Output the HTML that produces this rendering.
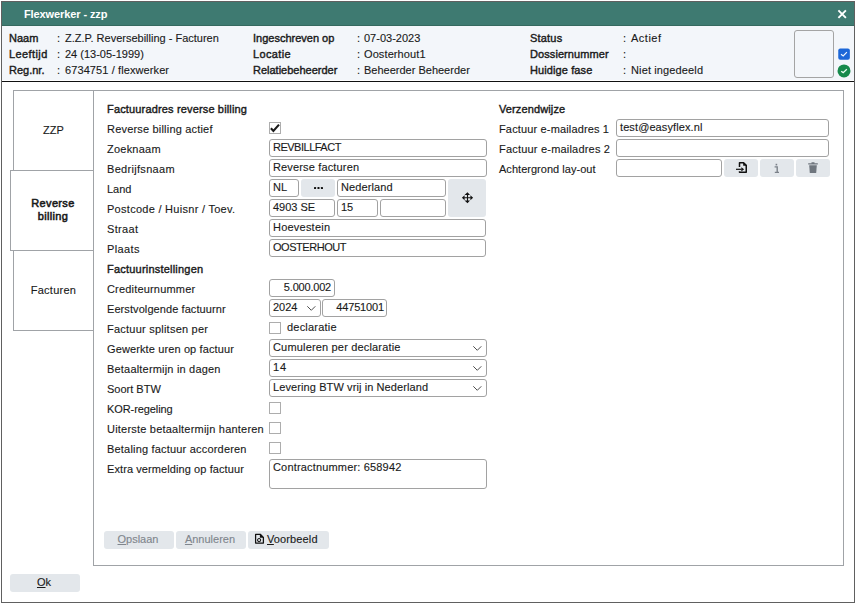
<!DOCTYPE html>
<html><head><meta charset="utf-8">
<style>
*{box-sizing:border-box;margin:0;padding:0}
html,body{width:856px;height:604px;background:#fff;overflow:hidden;position:relative;font-family:"Liberation Sans",sans-serif;font-size:11px;color:#222}
.a{position:absolute}
.t{position:absolute;white-space:nowrap;line-height:13px;font-size:11px;color:#1a1a1a;-webkit-text-stroke:0.12px currentColor}
.t.b{-webkit-text-stroke:0.4px currentColor}
.win{left:1px;top:1px;width:854px;height:602px;border:1px solid #606060;background:#fff}
.hdr{left:2px;top:2px;width:852px;height:24px;background:#3e7a71;border-bottom:1px solid #35695f}
.info{left:2px;top:26px;width:852px;height:54px;background:#f3f6fa}
.sep{left:2px;top:81px;width:852px;height:1px;background:#111}
.tab{position:absolute;border:1px solid #a0a3a7;background:#fff}
.panel{left:93px;top:90px;width:751px;height:476px;border:1px solid #a0a3a7;background:#fff}
.in{position:absolute;height:18px;border:1px solid #a2a2a2;border-radius:3px;background:#fff}
.cb{position:absolute;width:12px;height:12px;border:1px solid #adadad;background:#fff}
.btn{position:absolute;height:18px;border-radius:3px;background:#e3e7eb}
</style></head><body>
<div class="a win"></div>
<div class="a hdr"></div>
<div class="t" style="left:24px;top:8px;color:#fff;font-weight:bold;letter-spacing:-0.1px;-webkit-text-stroke:0">Flexwerker - zzp</div>
<svg class="a" style="left:837px;top:9px" width="11" height="11" viewBox="0 0 11 11"><path d="M1.4 1.4L8.9 8.9M8.9 1.4L1.4 8.9" stroke="#fff" stroke-width="1.9"/></svg>
<div class="a info"></div>
<div class="a sep"></div>

<!-- header info -->
<div class="t b" style="left:9px;top:32px">Naam</div>
<div class="t b" style="left:9px;top:48px;letter-spacing:0.4px">Leeftijd</div>
<div class="t b" style="left:9px;top:64px">Reg.nr.</div>
<div class="t" style="left:57px;top:32px">:</div><div class="t" style="left:65px;top:32px">Z.Z.P. Reversebilling - Facturen</div>
<div class="t" style="left:57px;top:48px">:</div><div class="t" style="left:65px;top:48px">24 (13-05-1999)</div>
<div class="t" style="left:57px;top:64px">:</div><div class="t" style="left:65px;top:64px;letter-spacing:0.1px">6734751 / flexwerker</div>

<div class="t b" style="left:253px;top:32px">Ingeschreven op</div>
<div class="t b" style="left:253px;top:48px;letter-spacing:0.35px">Locatie</div>
<div class="t b" style="left:253px;top:64px">Relatiebeheerder</div>
<div class="t" style="left:357px;top:32px">:</div><div class="t" style="left:364px;top:32px">07-03-2023</div>
<div class="t" style="left:357px;top:48px">:</div><div class="t" style="left:364px;top:48px;letter-spacing:0.1px">Oosterhout1</div>
<div class="t" style="left:357px;top:64px">:</div><div class="t" style="left:364px;top:64px">Beheerder Beheerder</div>

<div class="t b" style="left:530px;top:32px;letter-spacing:0.2px">Status</div>
<div class="t b" style="left:530px;top:48px;letter-spacing:0.08px">Dossiernummer</div>
<div class="t b" style="left:530px;top:64px;letter-spacing:0.1px">Huidige fase</div>
<div class="t" style="left:623px;top:32px">:</div><div class="t" style="left:631px;top:32px;letter-spacing:0.5px">Actief</div>
<div class="t" style="left:623px;top:48px">:</div>
<div class="t" style="left:623px;top:64px">:</div><div class="t" style="left:631px;top:64px;letter-spacing:0.13px">Niet ingedeeld</div>

<div class="a" style="left:794px;top:30px;width:40px;height:48px;border:1px solid #a4a4a4;border-radius:3px;background:#f3f6fa"></div>
<svg class="a" style="left:838px;top:48px" width="12" height="12" viewBox="0 0 12 12"><rect x="0.25" y="0.5" width="11.6" height="11.3" rx="2" fill="#1c67d8"/><path d="M3 6.3L5.2 7.9L8.9 4.2" stroke="#f4f8ff" stroke-width="1.15" fill="none"/></svg>
<svg class="a" style="left:837px;top:64px" width="14" height="14" viewBox="0 0 14 14"><circle cx="7" cy="6.9" r="6.5" fill="#168a4c"/><path d="M4.2 7.2L6.2 8.6L9.8 5.2" stroke="#eafff2" stroke-width="1.25" fill="none"/></svg>

<!-- tabs -->
<div class="tab" style="left:13px;top:90px;width:81px;height:81px"></div>
<div class="tab" style="left:13px;top:250px;width:81px;height:81px"></div>
<div class="a panel"></div>
<div class="tab" style="left:10px;top:170px;width:83px;height:81px;border-right:none"></div>
<div class="t" style="left:13px;top:124px;width:81px;text-align:center">ZZP</div>
<div class="t" style="left:11px;top:197px;width:84px;text-align:center;line-height:13px;white-space:normal;-webkit-text-stroke:0.55px #1a1a1a;letter-spacing:0.35px">Reverse<br>billing</div>
<div class="t" style="left:13px;top:284px;width:81px;text-align:center;letter-spacing:0.25px">Facturen</div>


<!-- form labels -->
<div class="t b" style="left:107px;top:103px;letter-spacing:0.156px">Factuuradres reverse billing</div>
<div class="t" style="left:107px;top:123px;letter-spacing:0.190px">Reverse billing actief</div>
<div class="t" style="left:107px;top:143px;letter-spacing:0.230px">Zoeknaam</div>
<div class="t" style="left:107px;top:163px;letter-spacing:0.310px">Bedrijfsnaam</div>
<div class="t" style="left:107px;top:183px;letter-spacing:0.000px">Land</div>
<div class="t" style="left:107px;top:203px;letter-spacing:0.280px">Postcode / Huisnr / Toev.</div>
<div class="t" style="left:107px;top:223px;letter-spacing:0.320px">Straat</div>
<div class="t" style="left:107px;top:243px;letter-spacing:0.380px">Plaats</div>
<div class="t b" style="left:107px;top:263px;letter-spacing:0.210px">Factuurinstellingen</div>
<div class="t" style="left:107px;top:283px;letter-spacing:0.180px">Crediteurnummer</div>
<div class="t" style="left:107px;top:303px;letter-spacing:0.080px">Eerstvolgende factuurnr</div>
<div class="t" style="left:107px;top:323px;letter-spacing:0.230px">Factuur splitsen per</div>
<div class="t" style="left:107px;top:343px;letter-spacing:0.120px">Gewerkte uren op factuur</div>
<div class="t" style="left:107px;top:363px;letter-spacing:0.190px">Betaaltermijn in dagen</div>
<div class="t" style="left:107px;top:383px;letter-spacing:0.000px">Soort BTW</div>
<div class="t" style="left:107px;top:403px;letter-spacing:-0.090px">KOR-regeling</div>
<div class="t" style="left:107px;top:423px;letter-spacing:0.210px">Uiterste betaaltermijn hanteren</div>
<div class="t" style="left:107px;top:443px;letter-spacing:0.190px">Betaling factuur accorderen</div>
<div class="t" style="left:107px;top:463px;letter-spacing:0.090px">Extra vermelding op factuur</div>

<!-- form controls -->
<div class="cb" style="left:269px;top:122px"></div>
<svg class="a" style="left:269px;top:122px" width="12" height="12" viewBox="0 0 12 12"><path d="M1.9 6.3L4.4 9L10 2.6" stroke="#1a1a1a" stroke-width="2.1" fill="none"/></svg>
<div class="in" style="left:269px;top:139px;width:218px"></div>
<div class="t" style="left:273px;top:141px;letter-spacing:-0.5px">REVBILLFACT</div>
<div class="in" style="left:269px;top:159px;width:218px"></div>
<div class="t" style="left:273px;top:161px;letter-spacing:0.15px">Reverse facturen</div>
<div class="in" style="left:269px;top:179px;width:30px"></div>
<div class="t" style="left:273px;top:181px">NL</div>
<div class="btn" style="left:301px;top:179px;width:34px"></div>
<svg class="a" style="left:301px;top:179px" width="34" height="18" viewBox="0 0 34 18"><rect x="13" y="7.9" width="2.1" height="2.1" rx="0.6" fill="#111"/><rect x="16.45" y="7.9" width="2.1" height="2.1" rx="0.6" fill="#111"/><rect x="19.9" y="7.9" width="2.1" height="2.1" rx="0.6" fill="#111"/></svg>
<div class="in" style="left:337px;top:179px;width:109px"></div>
<div class="t" style="left:341px;top:181px;letter-spacing:0.12px">Nederland</div>
<div class="btn" style="left:448px;top:179px;width:38px;height:38px"></div>
<svg class="a" style="left:461px;top:192px" width="13" height="12" viewBox="0 0 13 12"><path d="M6.5 0.2L9 2.9H3.5Z M6.5 11.2L9 8.5H3.5Z M0.9 5.8L3.6 3.3V8.3Z M12.1 5.8L9.4 3.3V8.3Z" fill="#111"/><path d="M6.5 2.5V9M3.2 5.8H9.8" stroke="#111" stroke-width="1.1"/></svg>
<div class="in" style="left:269px;top:199px;width:66px"></div>
<div class="t" style="left:273px;top:201px">4903 SE</div>
<div class="in" style="left:337px;top:199px;width:41px"></div>
<div class="t" style="left:341px;top:201px">15</div>
<div class="in" style="left:380px;top:199px;width:66px"></div>
<div class="in" style="left:269px;top:219px;width:217px"></div>
<div class="t" style="left:273px;top:221px;letter-spacing:0.22px">Hoevestein</div>
<div class="in" style="left:269px;top:239px;width:217px"></div>
<div class="t" style="left:273px;top:241px;letter-spacing:-0.45px">OOSTERHOUT</div>

<div class="in" style="left:269px;top:279px;width:66px"></div>
<div class="t" style="left:269px;top:281px;width:62px;text-align:right;letter-spacing:-0.2px">5.000.002</div>
<div class="in" style="left:269px;top:299px;width:52px"></div>
<div class="t" style="left:273px;top:301px">2024</div>
<svg class="a chev" style="left:305px;top:304px" width="11" height="8" viewBox="0 0 11 8"><path d="M2.3 2.3L6.3 6.3L10.3 2.3" stroke="#444" stroke-width="0.95" fill="none"/></svg>
<div class="in" style="left:322px;top:299px;width:65px"></div>
<div class="t" style="left:322px;top:301px;width:62px;text-align:right;letter-spacing:-0.15px">44751001</div>
<div class="cb" style="left:269px;top:322px"></div>
<div class="t" style="left:287px;top:321px;letter-spacing:0.2px">declaratie</div>
<div class="in" style="left:269px;top:339px;width:218px"></div>
<div class="t" style="left:273px;top:341px;letter-spacing:0.17px">Cumuleren per declaratie</div>
<svg class="a chev" style="left:471px;top:344px" width="11" height="8" viewBox="0 0 11 8"><path d="M2.3 2.3L6.3 6.3L10.3 2.3" stroke="#444" stroke-width="0.95" fill="none"/></svg>
<div class="in" style="left:269px;top:359px;width:218px"></div>
<div class="t" style="left:273px;top:361px;letter-spacing:0.9px">14</div>
<svg class="a chev" style="left:471px;top:364px" width="11" height="8" viewBox="0 0 11 8"><path d="M2.3 2.3L6.3 6.3L10.3 2.3" stroke="#444" stroke-width="0.95" fill="none"/></svg>
<div class="in" style="left:269px;top:379px;width:218px"></div>
<div class="t" style="left:273px;top:381px;letter-spacing:0.1px">Levering BTW vrij in Nederland</div>
<svg class="a chev" style="left:471px;top:384px" width="11" height="8" viewBox="0 0 11 8"><path d="M2.3 2.3L6.3 6.3L10.3 2.3" stroke="#444" stroke-width="0.95" fill="none"/></svg>
<div class="cb" style="left:269px;top:402px"></div>
<div class="cb" style="left:269px;top:422px"></div>
<div class="cb" style="left:269px;top:442px"></div>
<div class="in" style="left:269px;top:459px;width:218px;height:30px"></div>
<div class="t" style="left:273px;top:461px;letter-spacing:0.17px">Contractnummer: 658942</div>

<!-- right column -->
<div class="t b" style="left:499px;top:103px;letter-spacing:0.12px">Verzendwijze</div>
<div class="t" style="left:499px;top:123px;letter-spacing:0.15px">Factuur e-mailadres 1</div>
<div class="t" style="left:499px;top:143px;letter-spacing:0.2px">Factuur e-mailadres 2</div>
<div class="t" style="left:499px;top:163px;letter-spacing:0.03px">Achtergrond lay-out</div>
<div class="in" style="left:616px;top:119px;width:213px"></div>
<div class="t" style="left:620px;top:121px;letter-spacing:0.1px">test@easyflex.nl</div>
<div class="in" style="left:616px;top:139px;width:213px"></div>
<div class="in" style="left:616px;top:159px;width:106px"></div>
<div class="btn" style="left:724px;top:159px;width:34px"></div>
<div class="btn" style="left:760px;top:159px;width:34px"></div>
<div class="btn" style="left:796px;top:159px;width:34px"></div>
<svg class="a" style="left:735px;top:161px" width="13" height="13" viewBox="0 0 13 13"><path d="M4.5 6V1.75H8.6L11.25 4.4V11.25H4.5V10.2" stroke="#111" stroke-width="1.5" fill="none" stroke-linejoin="round"/><path d="M8.2 1.2V4.8H11.8Z" fill="#111"/><path d="M1 8.3H6.5" stroke="#111" stroke-width="1.2"/><path d="M9.1 8.3L6.3 6.2V10.4Z" fill="#111"/></svg>
<svg class="a" style="left:773px;top:163px" width="8" height="11" viewBox="0 0 8 11"><rect x="2.6" y="0.8" width="1.6" height="1.6" fill="#7b8189"/><path d="M1.6 3.9H4.2V9.4M1.8 9.4H6" stroke="#7b8189" stroke-width="1.4" fill="none"/></svg>
<svg class="a" style="left:807px;top:161px" width="12" height="13" viewBox="0 0 12 13"><path d="M1.2 2.2H10.8V3.5H1.2Z M4.5 1.2H7.5V2.4H4.5Z" fill="#6f767e"/><path d="M2.2 4.2H9.8L9.2 11.9H2.8Z" fill="#6f767e"/></svg>

<!-- bottom buttons -->
<div class="btn" style="left:104px;top:531px;width:70px"></div>
<div class="t" style="left:103px;top:533px;width:70px;text-align:center;color:#80868d"><u>O</u>pslaan</div>
<div class="btn" style="left:176px;top:531px;width:70px"></div>
<div class="t" style="left:175px;top:533px;width:70px;text-align:center;color:#80868d"><u>A</u>nnuleren</div>
<div class="btn" style="left:248px;top:531px;width:81px"></div>
<div class="t" style="left:267px;top:533px;letter-spacing:0.12px"><u>V</u>oorbeeld</div>
<svg class="a" style="left:254px;top:533px" width="11" height="12" viewBox="0 0 11 12"><path d="M1.6 1.3H6.3L9.4 4.4V10.1H1.6Z" stroke="#111" stroke-width="1.25" fill="none" stroke-linejoin="round"/><path d="M5.9 0.7V4.8H10Z" fill="#111"/><circle cx="5.1" cy="7.1" r="1.55" stroke="#111" stroke-width="1.05" fill="none"/></svg>

<div class="btn" style="left:10px;top:574px;width:70px"></div>
<div class="t" style="left:9px;top:576px;width:70px;text-align:center"><u>O</u>k</div>
</body></html>
